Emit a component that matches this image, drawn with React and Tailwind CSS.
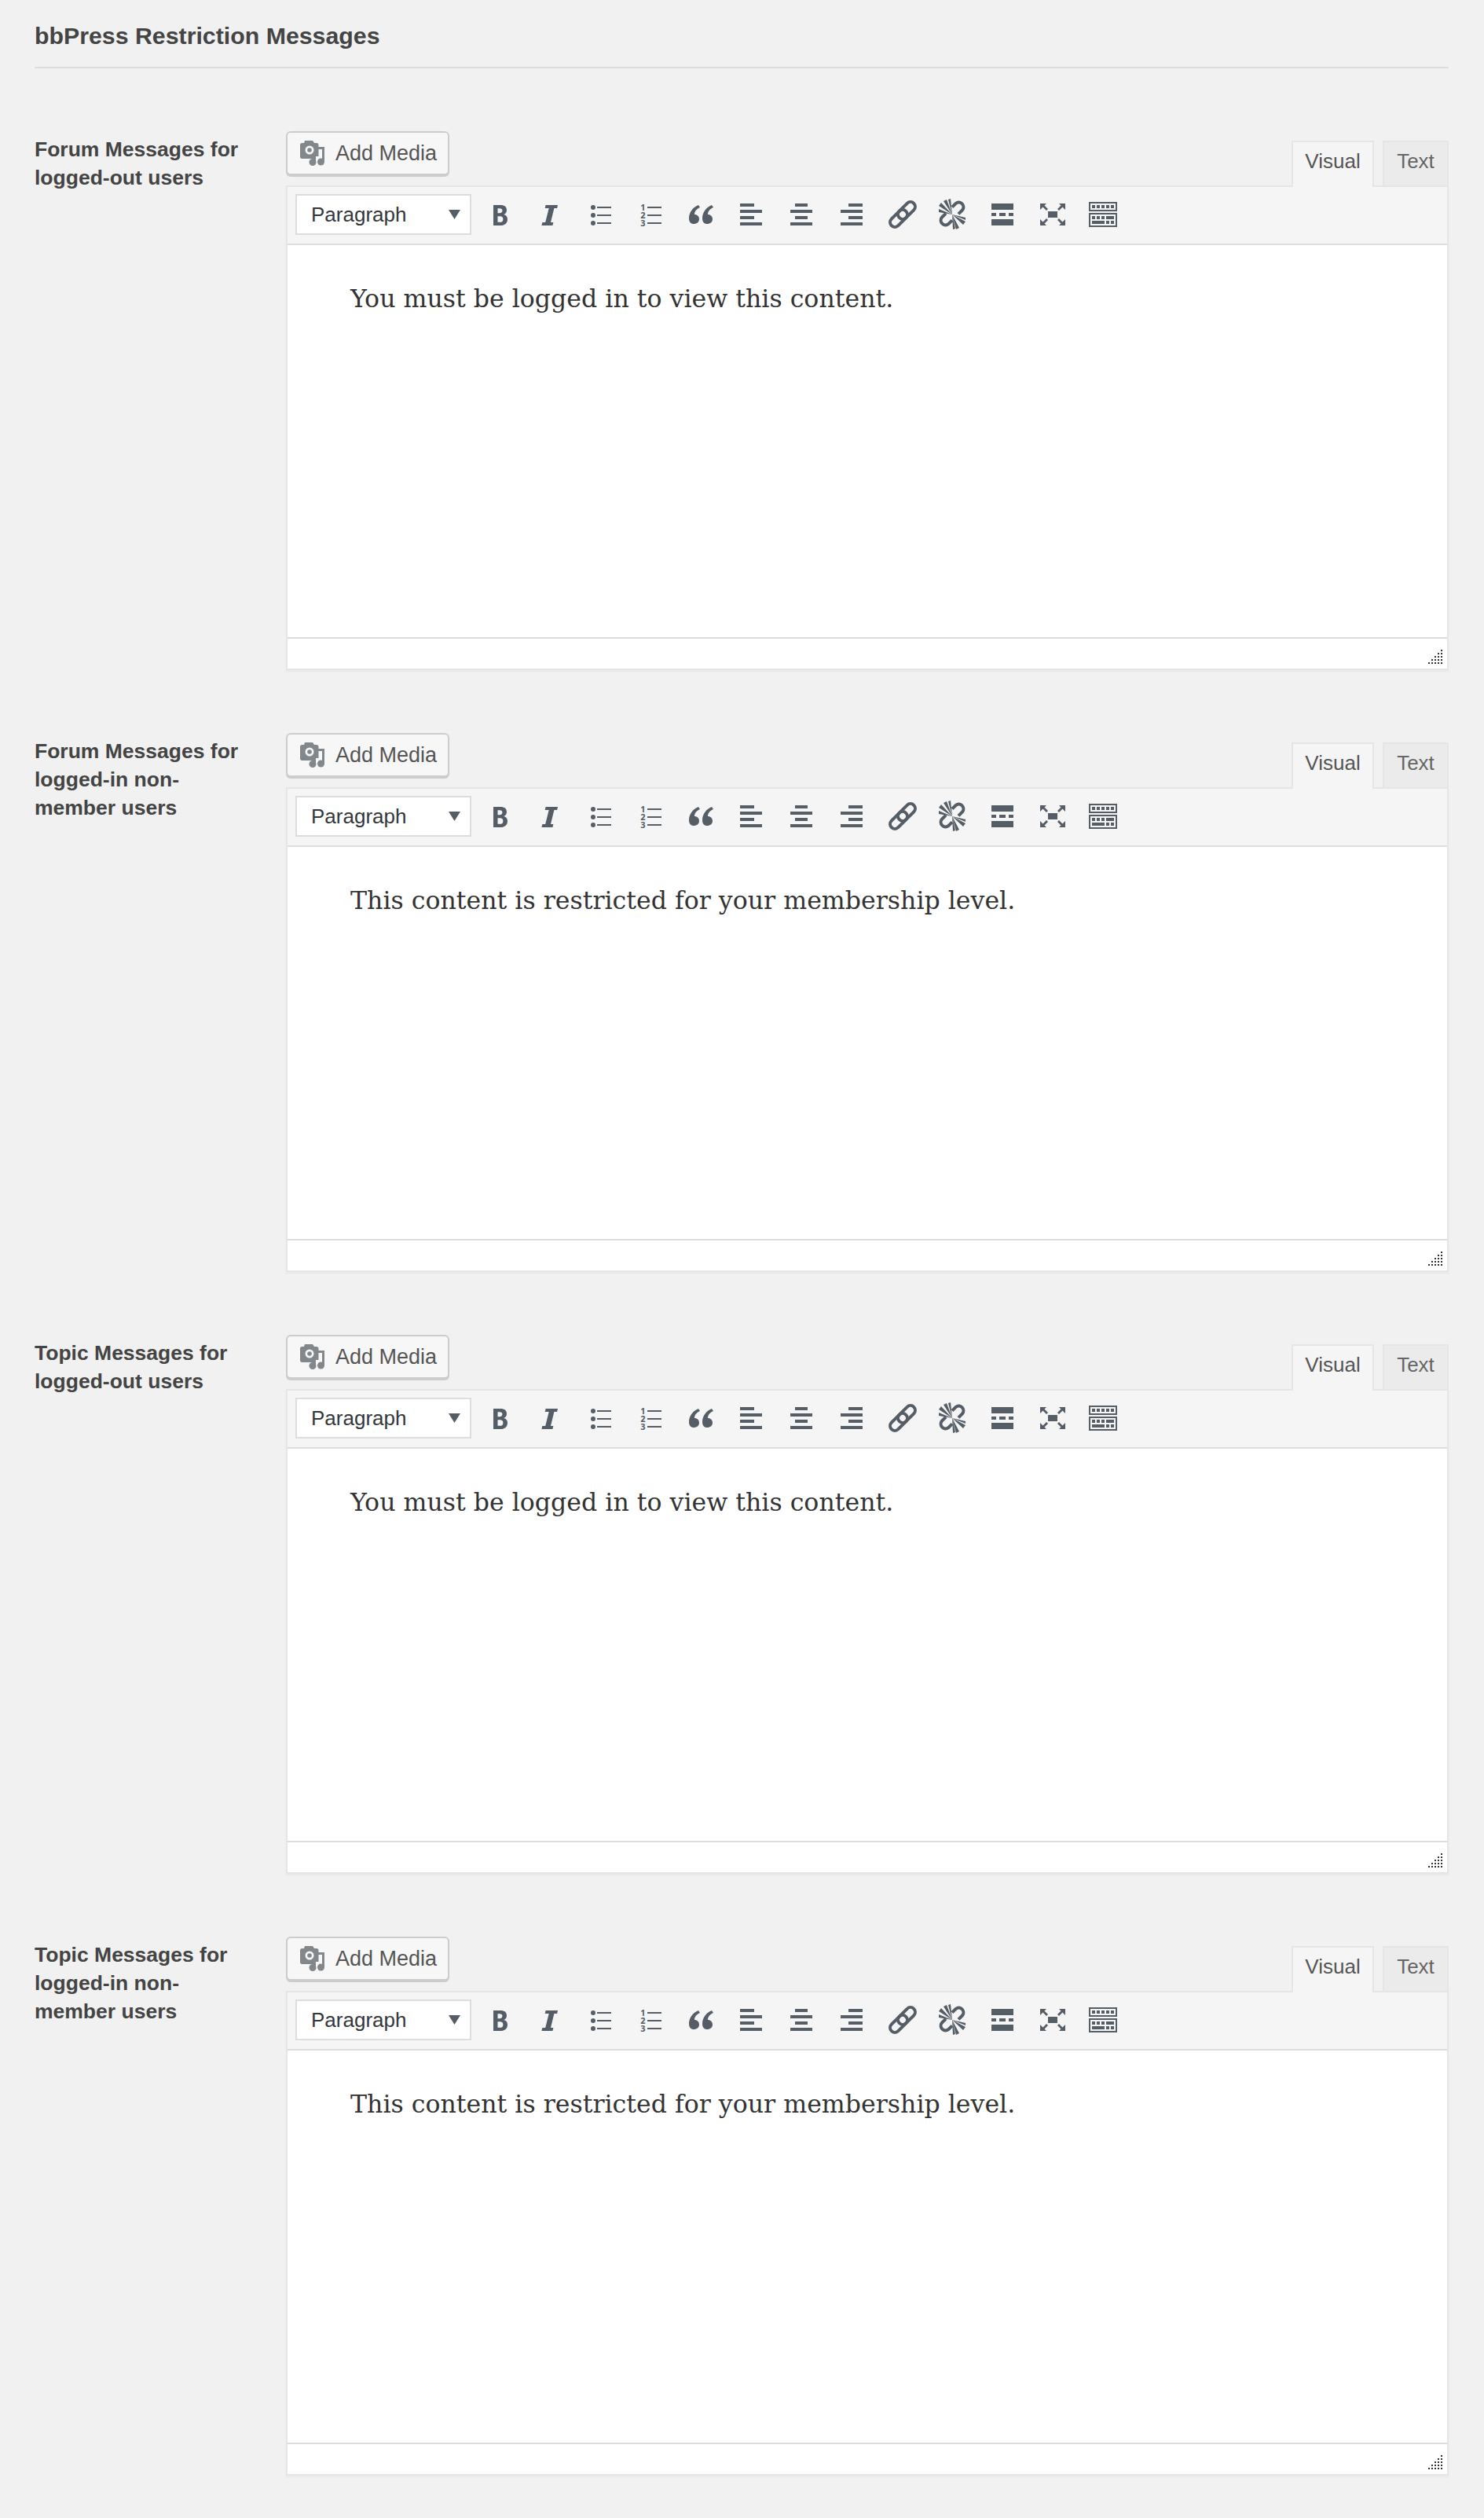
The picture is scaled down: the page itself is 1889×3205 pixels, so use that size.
import React from "react";

const sans = "font-['Liberation_Sans',Arial,sans-serif]";

function IconBold() {
  return <path fillRule="evenodd" d="M12 8h9c5.2 0 8 2.2 8 6.4 0 2.9-1.4 4.8-3.9 5.500 3.1.7 4.9 2.800 4.9 6 0 5-3.500 8.100-9 8.100h-9V8zm5.500 4.200v6h2.400c2.300 0 3.600-1.100 3.600-3.100 0-1.900-1.300-2.900-3.600-2.900h-2.400zm0 10v7.600h3c2.500 0 3.900-1.400 3.900-3.900 0-2.400-1.400-3.700-3.900-3.700h-3z" />;
}
function IconItalic() {
  return <path d="M14.600 8H30l-.9 4h-3.700L21 30h3.400l-1 4H9.400l1-4h3.800l4.500-18h-5z" />;
}
function IconUl() {
  return (
    <g>
      <circle cx="11" cy="11" r="3" /><circle cx="11" cy="21" r="3" /><circle cx="11" cy="31" r="3" />
      <rect x="16" y="10" width="18" height="2" /><rect x="16" y="20" width="18" height="2" /><rect x="16" y="30" width="18" height="2" />
    </g>
  );
}
function IconOl() {
  return (
    <g>
      <text x="10.500" y="15" textAnchor="middle" fontSize="11" fontWeight="700" fontFamily="'Noto Sans',sans-serif">1</text>
      <text x="10.500" y="25" textAnchor="middle" fontSize="11" fontWeight="700" fontFamily="'Noto Sans',sans-serif">2</text>
      <text x="10.500" y="35" textAnchor="middle" fontSize="11" fontWeight="700" fontFamily="'Noto Sans',sans-serif">3</text>
      <rect x="16" y="10" width="18" height="2" /><rect x="16" y="20" width="18" height="2" /><rect x="16" y="30" width="18" height="2" />
    </g>
  );
}
function IconQuote() {
  const d = "M17 8C10 11 5 17 5 25c0 4.500 2.500 7 6 7 4 0 7-2.200 7-6 0-3.500-2.500-6-6-6 0-4 2.500-7 7-9z";
  return <g><path d={d} /><path d={d} transform="translate(17 0)" /></g>;
}
function Align({ s }) {
  const w = s === 12 ? 16 : 18;
  return (
    <g>
      <rect x={s} y="6" width={w} height="4" />
      <rect x="6" y="14" width="28" height="4" />
      <rect x={s} y="22" width={w} height="4" />
      <rect x="6" y="30" width="28" height="4" />
    </g>
  );
}
function Chain() {
  return (
    <g fill="none" stroke="#555d66" strokeWidth="4">
      <rect x="-13" y="-6" width="26" height="12" rx="6" transform="translate(26 15) rotate(-45)" />
      <rect x="-13" y="-6" width="26" height="12" rx="6" transform="translate(16 25) rotate(-45)" />
    </g>
  );
}
function IconUnlink() {
  return (
    <g>
      <g fill="none" stroke="#555d66" strokeWidth="4">
        <path d="M20 10.600L24.800 5.800A6 6 0 0 1 33.200 14.200L28 19.400" />
        <path d="M20 27.400L15.200 32.200A6 6 0 0 1 6.800 23.800L12 18.600" />
      </g>
      <path d="M20 20L3 9l3-4zM20 20L9 3l4-2zM20 20L15 1l3-1zM20 20L3 13v4zM20 20L37 29l-3 4zM20 20L29 37l-4 2zM20 20L24 38l-3 1zM20 20L37 24v3z" />
    </g>
  );
}
function IconMore() {
  return (
    <g>
      <rect x="6" y="6" width="28" height="8" />
      <rect x="6" y="18" width="6" height="4" /><rect x="16" y="18" width="8" height="4" /><rect x="28" y="18" width="6" height="4" />
      <rect x="6" y="26" width="28" height="8" />
    </g>
  );
}
function IconFull() {
  return (
    <g>
      <rect x="14" y="16" width="12" height="8" />
      <path d="M4 6h8L9.500 8.500 14 13l-2 2-4.500-4.500L4 14z" />
      <path d="M36 6h-8l2.500 2.500L26 13l2 2 4.500-4.500L36 14z" />
      <path d="M4 34h8l-2.500-2.500L14 27l-2-2-4.500 4.500L4 26z" />
      <path d="M36 34h-8l2.500-2.500L26 27l2-2 4.500 4.500L36 26z" />
    </g>
  );
}
function IconKitchen() {
  return (
    <g>
      <rect x="3" y="5" width="34" height="10" fill="none" stroke="#555d66" strokeWidth="2" />
      <rect x="6" y="8" width="4" height="4" /><rect x="12" y="8" width="4" height="4" /><rect x="18" y="8" width="4" height="4" /><rect x="24" y="8" width="4" height="4" /><rect x="30" y="8" width="4" height="4" />
      <rect x="3" y="19" width="34" height="16" fill="none" stroke="#555d66" strokeWidth="2" />
      <rect x="6" y="22" width="4" height="4" /><rect x="12" y="22" width="4" height="4" /><rect x="18" y="22" width="4" height="4" /><rect x="24" y="22" width="10" height="4" />
      <rect x="6" y="28" width="16" height="4" /><rect x="24" y="28" width="4" height="4" /><rect x="30" y="28" width="4" height="4" />
    </g>
  );
}

const icons = [
  <IconBold />, <IconItalic />, <IconUl />, <IconOl />, <IconQuote />,
  <Align s={6} />, <Align s={12} />, <Align s={16} />,
  <Chain />, <IconUnlink />, <IconMore />, <IconFull />, <IconKitchen />,
];

function MediaIcon() {
  return (
    <svg width="32" height="32" viewBox="0 0 32 32" fill="#82878c" className="shrink-0">
      <path fillRule="evenodd" d="M6 0h10l2 3h3c1.500 0 2.500 1 2.500 2.500V20H19v3H2.500C1 23 0 22 0 20.500v-15C0 4 1 3 2.500 3H5zM12 6.500a5.500 5.500 0 1 0 0 11 5.500 5.500 0 0 0 0-11z" />
      <circle cx="12" cy="12" r="2.800" />
      <path d="M23 8h8v19h-3V11h-5z" />
      <circle cx="26.500" cy="27" r="4.500" />
      <path d="M17 17h3v10h-3z" />
      <circle cx="16" cy="27.500" r="4.500" />
    </svg>
  );
}

function Grip() {
  const dots = [];
  for (let c = 0; c < 5; c++) {
    for (let r = 4 - c; r < 5; r++) {
      dots.push(<rect key={c + "-" + r} x={c * 4} y={r * 4} width="2" height="2" />);
    }
  }
  return <svg width="18" height="18" viewBox="0 0 18 18" fill="#333">{dots}</svg>;
}

function Editor({ text }) {
  return (
    <div className="flex-1 min-w-0">
      <div className="flex items-end justify-between h-[69px]">
        <button className={`${sans} self-start flex items-center gap-[13px] w-[208px] h-[56px] pl-4 border-2 border-[#cccccc] rounded-[6px] bg-[#f7f7f7] shadow-[0_2px_0_#cccccc] text-[27px] text-[#555555]`}>
          <MediaIcon />
          <span className="pt-[1px]">Add Media</span>
        </button>
        <div className={`${sans} flex items-end gap-[11px] text-[26px]`}>
          <div className="relative z-10 -mb-[2px] flex items-center justify-center w-[105px] h-[59px] pb-2 border-2 border-b-0 border-[#e5e5e5] bg-[#f5f5f5] text-[#555555]">Visual</div>
          <div className="flex items-center justify-center w-[84px] h-[57px] pb-[6px] border-2 border-b-0 border-[#e5e5e5] bg-[#ebebeb] text-[#666666]">Text</div>
        </div>
      </div>
      <div className="border-2 border-[#e5e5e5] shadow-[0_2px_2px_rgba(0,0,0,0.04)]">
        <div className="flex items-start h-[74px] pt-[9px] pl-[10px] bg-[#f5f5f5] border-b-2 border-[#dddddd]">
          <div className={`${sans} flex items-center justify-between w-[224px] h-[52px] pl-[18px] pr-3 mr-1 border-2 border-[#dddddd] bg-white text-[26px] text-[#32373c]`}>
            <span className="pt-[1px]">Paragraph</span>
            <svg width="15" height="12" viewBox="0 0 15 12" fill="#555d66"><path d="M0 0h15L7.500 12z" /></svg>
          </div>
          {icons.map((icon, i) => (
            <div key={i} className="flex items-center justify-center w-16 h-[52px]">
              <svg width="40" height="40" viewBox="0 0 40 40" fill="#555d66">{icon}</svg>
            </div>
          ))}
        </div>
        <div className="h-[499px] pl-[80px] pt-[48px] bg-white font-['DejaVu_Serif',serif] text-[31.6px] leading-[40px] text-[#333333]">
          {text}
        </div>
        <div className="flex justify-end h-[40px] pt-[14px] pr-[6px] bg-white border-t-2 border-[#dddddd]">
          <Grip />
        </div>
      </div>
    </div>
  );
}

const rows = [
  ["Forum Messages for logged-out users", "You must be logged in to view this content."],
  ["Forum Messages for logged-in non-member users", "This content is restricted for your membership level."],
  ["Topic Messages for logged-out users", "You must be logged in to view this content."],
  ["Topic Messages for logged-in non-member users", "This content is restricted for your membership level."],
];

export default function App() {
  return (
    <div className={`${sans} min-h-[3205px] bg-[#f1f1f1] pl-[44px] pr-[45px] pt-[26px] pb-[54px]`}>
      <h2 className="h-[61px] border-b-2 border-[#dddddd] text-[30.3px] leading-[40px] font-bold text-[#444444]">bbPress Restriction Messages</h2>
      <div className="flex flex-col gap-[80px] mt-[80px]">
        {rows.map(([label, text], i) => (
          <div key={i} className="flex">
            <div className="w-[272px] mr-[48px] pt-[5px] text-[26.5px] leading-[36px] font-bold text-[#444444]">{label}</div>
            <Editor text={text} />
          </div>
        ))}
      </div>
    </div>
  );
}
